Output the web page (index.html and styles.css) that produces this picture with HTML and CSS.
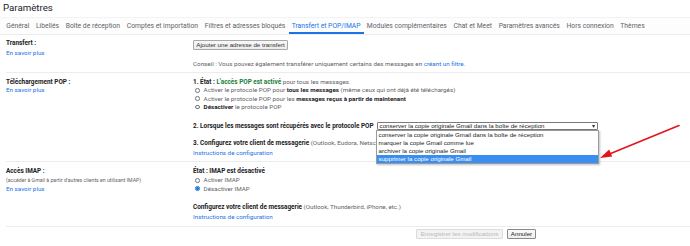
FILE: index.html
```html
<!DOCTYPE html>
<html lang="fr">
<head>
<meta charset="utf-8">
<title>Paramètres</title>
<link rel="stylesheet" href="styles.css">
</head>
<body>
<div class="page">
  <h1 class="title">Paramètres</h1>
  <nav class="tabs">
    <span class="tab">Général</span>
    <span class="tab">Libellés</span>
    <span class="tab">Boîte de réception</span>
    <span class="tab">Comptes et importation</span>
    <span class="tab">Filtres et adresses bloqués</span>
    <span class="tab active">Transfert et POP/IMAP</span>
    <span class="tab">Modules complémentaires</span>
    <span class="tab">Chat et Meet</span>
    <span class="tab">Paramètres avancés</span>
    <span class="tab">Hors connexion</span>
    <span class="tab">Thèmes</span>
  </nav>

  <section class="row row-fwd">
    <div class="lbl">
      <div class="line b">Transfert :</div>
      <a class="line link gap-learn">En savoir plus</a>
    </div>
    <div class="val">
      <button class="btn btn-add">Ajouter une adresse de transfert</button>
      <div class="line muted tip">Conseil : Vous pouvez également transférer uniquement certains des messages en <a class="link">créant un filtre</a>.</div>
    </div>
  </section>

  <section class="row row-pop">
    <div class="lbl">
      <div class="line b">Téléchargement POP :</div>
      <a class="line link">En savoir plus</a>
    </div>
    <div class="val">
      <div class="line"><b>1. État :</b> <b class="green">L'accès POP est activé</b> <span class="muted">pour tous les messages.</span></div>
      <div class="line opt"><span class="radio"></span><span class="muted">Activer le protocole POP pour <b class="dark">tous les messages</b> (même ceux qui ont déjà été téléchargés)</span></div>
      <div class="line opt"><span class="radio"></span><span class="muted">Activer le protocole POP pour les <b class="dark">messages reçus à partir de maintenant</b></span></div>
      <div class="line opt"><span class="radio"></span><span class="muted"><b class="dark">Désactiver</b> le protocole POP</span></div>
      <div class="selline">
        <b>2. Lorsque les messages sont récupérés avec le protocole POP</b>
        <span class="selwrap">
          <span class="select">conserver la copie originale Gmail dans la boîte de réception<span class="chev">▾</span></span>
          <ul class="popup">
            <li>conserver la copie originale Gmail dans la boîte de réception</li>
            <li>marquer la copie Gmail comme lue</li>
            <li>archiver la copie originale Gmail</li>
            <li class="hl">supprimer la copie originale Gmail</li>
          </ul>
        </span>
      </div>
      <div class="line step3"><b>3. Configurez votre client de messagerie</b> <span class="muted">(Outlook, Eudora, Netscape Mail, etc.)</span></div>
      <a class="line link instr">Instructions de configuration</a>
    </div>
  </section>

  <section class="row row-imap">
    <div class="lbl">
      <div class="line b">Accès IMAP :</div>
      <div class="line small muted gap-imap">(accéder à Gmail à partir d'autres clients en utilisant IMAP)</div>
      <a class="line link gap-imap2">En savoir plus</a>
    </div>
    <div class="val">
      <div class="line"><b>État : IMAP est désactivé</b></div>
      <div class="line opt gap-imap"><span class="radio"></span><span class="muted">Activer IMAP</span></div>
      <div class="line opt gap-imap2"><span class="radio on"></span><span class="muted">Désactiver IMAP</span></div>
      <div class="line cfg"><b>Configurez votre client de messagerie</b> <span class="muted">(Outlook, Thunderbird, iPhone, etc.)</span></div>
      <a class="line link gap-imap">Instructions de configuration</a>
    </div>
  </section>

  <div class="actions">
    <button class="btn btn-save" disabled>Enregistrer les modifications</button>
    <button class="btn btn-cancel">Annuler</button>
  </div>
</div>

<svg class="arrow" width="690" height="246" viewBox="0 0 690 246" aria-hidden="true">
  <line x1="679" y1="125.5" x2="607" y2="155" stroke="#e3141b" stroke-width="1.6" stroke-linecap="round"/>
  <polygon points="600,158 612.2,156.6 609.2,149.6" fill="#e3141b"/>
</svg>
</body>
</html>
```
FILE: styles.css
```css
* { box-sizing: border-box; }
html, body { margin: 0; padding: 0; background: #fff; }
body {
  font-family: Roboto, "Liberation Sans", Arial, sans-serif;
  color: #202124;
  font-size: 6.25px;
  width: 690px;
  height: 246px;
  overflow: hidden;
  position: relative;
}
.page { width: 690px; }
b, .b { font-size: 6.4px; font-weight: 700; }
.muted b { font-size: 6.25px; }

.title {
  margin: 0;
  height: 17px;
  line-height: 15px;
  padding-left: 3px;
  font-size: 9.7px;
  font-weight: 400;
  color: #202124;
}

.tabs {
  display: flex;
  height: 18px;
  align-items: stretch;
  padding-left: 3px;
  border-top: 1px solid #f3f3f3;
  border-bottom: 1px solid #ececec;
  background: #fdfdfd;
}
.tab {
  font-size: 6.75px;
  color: #5f6368;
  padding: 0 3.35px;
  line-height: 17px;
  white-space: nowrap;
}
.tab.active {
  color: #1a73e8;
  font-weight: 400;
  border-bottom: 2px solid #1a73e8;
  line-height: 15px;
  padding-top: 1px;
  padding-left: 3px;
  padding-right: 3px;
}

.row {
  display: grid;
  grid-template-columns: 187px 1fr;
  margin-left: 6px;
  border-bottom: 1px solid #ececec;
}
.lbl, .val { display: flex; flex-direction: column; align-items: flex-start; }
.line { display: block; height: 8.2px; line-height: 8.2px; white-space: nowrap; }
.b { color: #202124; }
.dark { color: #202124; }
.muted { color: #5f6368; }
.small { font-size: 5.2px; }
.link { color: #1a73e8; text-decoration: none; }
.green { color: #188038; }

.row-fwd { padding-top: 4px; padding-bottom: 4px; }
.gap-learn { margin-top: 1.7px; }
.btn {
  font-family: "Liberation Sans", Arial, sans-serif;
  font-size: 6.2px;
  padding: 0;
  border-radius: 1px;
  height: 9.6px;
  line-height: 7.6px;
  text-align: center;
}
.btn-add {
  margin-top: 1px;
  width: 95px;
  color: #333;
  background: linear-gradient(#f8f8f8, #ececec);
  border: 1px solid #a8a8a8;
}
.tip { margin-top: 10.4px; }

.row-pop { padding-top: 5px; padding-bottom: 4.3px; }
.opt { display: flex; align-items: center; }
.radio {
  display: inline-block;
  width: 4.6px;
  height: 4.6px;
  border: 0.7px solid #70757a;
  border-radius: 50%;
  margin-left: 2px;
  margin-right: 4px;
  flex: none;
}
.radio.on {
  border-color: #1a73e8;
  background: radial-gradient(circle, #1a73e8 0 1.3px, #fff 1.5px);
}
.selline {
  margin-top: 10.7px;
  height: 9px;
  display: flex;
  align-items: center;
  white-space: nowrap;
}
.selwrap { position: relative; margin-left: 3px; }
.select {
  display: block;
  position: relative;
  width: 221px;
  height: 8.6px;
  line-height: 6.6px;
  padding-left: 2px;
  border: 1px solid #7a7a7a;
  border-radius: 1px;
  font-family: "Liberation Sans", Arial, sans-serif;
  font-size: 6.15px;
  color: #222;
  background: #fff;
}
.chev {
  position: absolute;
  right: 2px;
  top: 0;
  font-size: 6px;
  color: #333;
}
.popup {
  position: absolute;
  top: 8.4px;
  left: -1px;
  width: 223px;
  margin: 0;
  padding: 0;
  list-style: none;
  background: #fff;
  border: 1px solid #9a9a9a;
  box-shadow: 1px 1px 2px rgba(0,0,0,0.25);
  font-family: "Liberation Sans", Arial, sans-serif;
  font-size: 6.15px;
  color: #222;
  z-index: 2;
}
.popup li { height: 7.9px; line-height: 7.9px; padding-left: 2px; white-space: nowrap; }
.popup li.hl { background: #3a8ef0; color: #fff; }
.step3 { margin-top: 8.2px; }
.instr { margin-top: 1.8px; }

.row-imap { padding-top: 4.5px; padding-bottom: 5px; }
.gap-imap { margin-top: 1.4px; }
.gap-imap2 { margin-top: 0.1px; }
.cfg { margin-top: 10.5px; }

.actions {
  display: flex;
  gap: 4px;
  padding-left: 415.7px;
  padding-top: 2px;
}
.btn-save {
  width: 87.6px;
  height: 10px;
  color: #b9b9b9;
  background: #f3f3f3;
  border: 1px solid #dcdcdc;
}
.btn-cancel {
  width: 28.4px;
  height: 10px;
  color: #222;
  background: linear-gradient(#fafafa, #eeeeee);
  border: 1px solid #8a8a8a;
}

.arrow { position: absolute; left: 0; top: 0; pointer-events: none; z-index: 5; }
```
